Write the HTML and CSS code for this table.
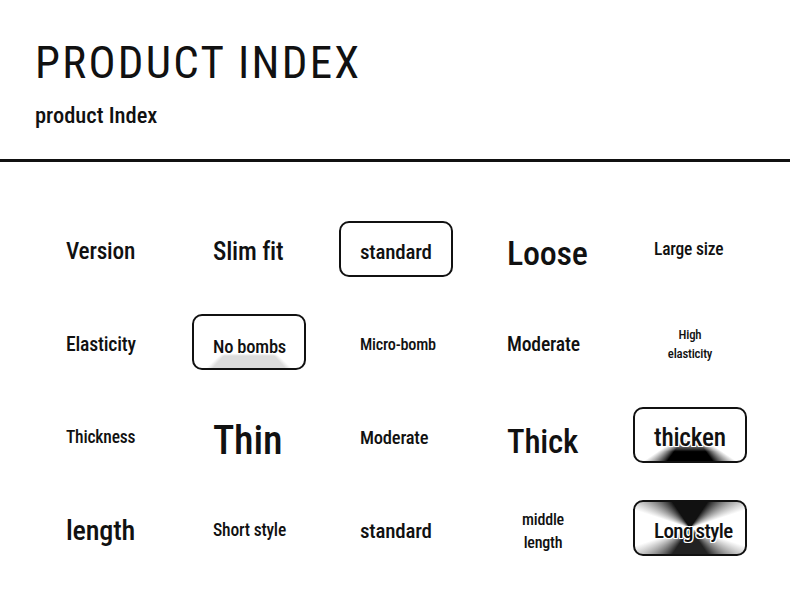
FILE: index.html
```html
<!DOCTYPE html>
<html>
<head>
<meta charset="utf-8">
<link rel="stylesheet" href="styles.css">
</head>
<body>
<header class="head">
  <h1 class="title">PRODUCT INDEX</h1>
  <p class="subtitle">product Index</p>
</header>
<div class="rule"></div>
<main class="grid">
  <div class="cell"><span class="t s24">Version</span></div>
  <div class="cell"><span class="t s26">Slim fit</span></div>
  <div class="cell box"><span class="t s22">standard</span></div>
  <div class="cell"><span class="t s35 big">Loose</span></div>
  <div class="cell"><span class="t s18 up">Large size</span></div>

  <div class="cell"><span class="t s20">Elasticity</span></div>
  <div class="cell box fx-gray"><span class="t s19 down">No bombs</span></div>
  <div class="cell"><span class="t s17">Micro-bomb</span></div>
  <div class="cell"><span class="t s20">Moderate</span></div>
  <div class="cell center"><span class="t s13 two">High<br>elasticity</span></div>

  <div class="cell"><span class="t s18">Thickness</span></div>
  <div class="cell"><span class="t s41 big2">Thin</span></div>
  <div class="cell"><span class="t s19">Moderate</span></div>
  <div class="cell"><span class="t s34 big2">Thick</span></div>
  <div class="cell box fx-mound"><span class="t s26 outline">thicken</span></div>

  <div class="cell"><span class="t s29">length</span></div>
  <div class="cell"><span class="t s18">Short style</span></div>
  <div class="cell"><span class="t s22">standard</span></div>
  <div class="cell center"><span class="t s165 two2">middle<br>length</span></div>
  <div class="cell box fx-hour"><span class="t s22 outline tight">Long style</span></div>
</main>
</body>
</html>
```
FILE: styles.css
```css
html, body {
  margin: 0;
  padding: 0;
  background: #fff;
}
body {
  width: 790px;
  height: 597px;
  overflow: hidden;
  color: #111;
  font-family: Roboto, "Open Sans", sans-serif;
  font-stretch: 75%;
  font-weight: 500;
}
.head {
  padding: 40px 35px 0;
  height: 119px;
  box-sizing: border-box;
}
.title {
  margin: 0;
  font-weight: 400;
  font-stretch: 87.5%;
  font-size: 45px;
  line-height: 46px;
  letter-spacing: 2.3px;
}
.subtitle {
  margin: 15px 0 0;
  font-size: 22.5px;
  line-height: 28px;
}
.rule {
  margin-top: 40px;
  height: 3px;
  background: #111;
}
.grid {
  margin-top: 59px;
  padding-left: 45px;
  display: grid;
  grid-template-columns: repeat(5, 114px);
  grid-auto-rows: 56px;
  column-gap: 33px;
  row-gap: 37px;
}
.cell {
  display: flex;
  align-items: center;
  padding-left: 21px;
  box-sizing: border-box;
  min-width: 0;
}
.cell.center {
  justify-content: center;
  padding-left: 0;
}
.t {
  text-align: center;
  line-height: 1;
  white-space: nowrap;
  margin-top: 6px;
  letter-spacing: -0.2px;
}
.box {
  padding-left: 19px;
  border: 2px solid #111;
  border-radius: 10px;
  overflow: hidden;
}
.outline {
  text-shadow: 1px 0 #fff, -1px 0 #fff, 0 1px #fff, 0 -1px #fff, 1px 1px #fff, -1px -1px #fff, 1px -1px #fff, -1px 1px #fff;
}
.tight { letter-spacing: -0.6px; word-spacing: -1.5px; }
.fx-gray {
  background:
    linear-gradient(to bottom, #fff 72%, rgba(255,255,255,0) 77%),
    conic-gradient(from 180deg at 50% 23%, #dcdcdc 0deg 42deg, #fff 47deg 313deg, #dcdcdc 318deg);
}
.fx-mound {
  background:
    linear-gradient(to bottom, #fff 58%, rgba(255,255,255,0) 82%),
    conic-gradient(from 180deg at 50% 40%, #000 0deg 36deg, #fff 56deg 304deg, #000 324deg);
}
.fx-hour {
  background: conic-gradient(#111 0deg 34deg, #fff 72deg 108deg, #222 146deg 214deg, #fff 252deg 288deg, #111 326deg);
}
.big { margin-top: 8px; }
.big2 { margin-top: 12px; }
.down { margin-top: 10px; }
.up { margin-top: 2px; }
.two { line-height: 19px; margin-top: 4px; }
.two2 { line-height: 23px; margin-top: 6px; }
.s13 { font-size: 12.8px; }
.s165 { font-size: 16px; }
.s17 { font-size: 16.2px; }
.s18 { font-size: 17.5px; }
.s19 { font-size: 18.5px; }
.s20 { font-size: 19.7px; }
.s22 { font-size: 21px; }
.s24 { font-size: 23.3px; }
.s26 { font-size: 25.2px; }
.s29 { font-size: 28.2px; }
.s34 { font-size: 33px; }
.s35 { font-size: 34px; }
.s41 { font-size: 40px; }
```
